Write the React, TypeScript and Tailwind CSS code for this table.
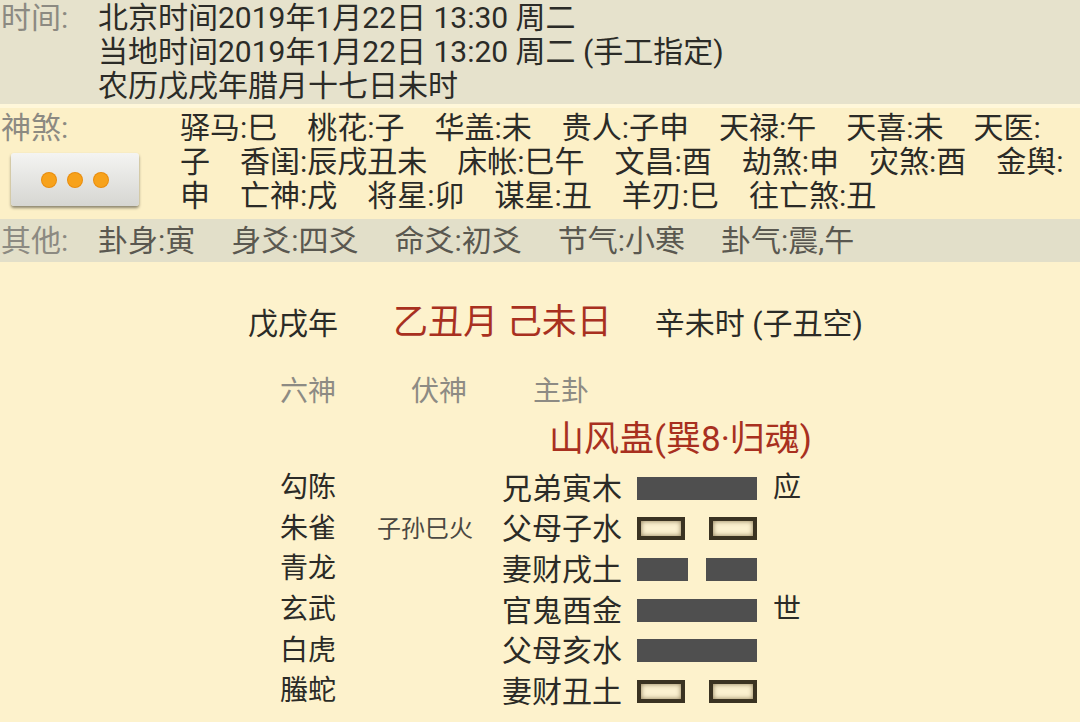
import React from "react";

const font = { fontFamily: '"Roboto", "Noto Sans CJK SC", sans-serif' };

const shensha = [
  ["驿马:巳", "桃花:子", "华盖:未", "贵人:子申", "天禄:午", "天喜:未", "天医:"],
  ["子", "香闺:辰戌丑未", "床帐:巳午", "文昌:酉", "劫煞:申", "灾煞:酉", "金舆:"],
  ["申", "亡神:戌", "将星:卯", "谋星:丑", "羊刃:巳", "往亡煞:丑"],
];

const others = ["卦身:寅", "身爻:四爻", "命爻:初爻", "节气:小寒", "卦气:震,午"];

type Yao = { god: string; fu?: string; main: string; kind: "yang" | "yin" | "hollow"; mark?: string };

const rows: Yao[] = [
  { god: "勾陈", main: "兄弟寅木", kind: "yang", mark: "应" },
  { god: "朱雀", fu: "子孙巳火", main: "父母子水", kind: "hollow" },
  { god: "青龙", main: "妻财戌土", kind: "yin" },
  { god: "玄武", main: "官鬼酉金", kind: "yang", mark: "世" },
  { god: "白虎", main: "父母亥水", kind: "yang" },
  { god: "螣蛇", main: "妻财丑土", kind: "hollow" },
];

const Line = ({ kind }: { kind: Yao["kind"] }) => {
  if (kind === "yang") return <div className="w-[120px] h-[23px] bg-[#4f4f4f]" />;
  if (kind === "yin")
    return (
      <div className="w-[120px] h-[23px] flex justify-between">
        <div className="w-[51px] h-full bg-[#4f4f4f]" />
        <div className="w-[51px] h-full bg-[#4f4f4f]" />
      </div>
    );
  return (
    <div className="w-[120px] h-[23px] flex justify-between">
      <div className="w-[48px] h-full border-[4px] border-[#3a3322] bg-[#fbf1d0] shadow-[inset_0_0_5px_rgba(90,70,30,0.7)]" />
      <div className="w-[48px] h-full border-[4px] border-[#3a3322] bg-[#fbf1d0] shadow-[inset_0_0_5px_rgba(90,70,30,0.7)]" />
    </div>
  );
};

export default function App() {
  return (
    <div className="w-[1080px] h-[722px] overflow-hidden bg-[#fdf2cc] text-[#2b2b27]" style={font}>
      {/* 时间 */}
      <div className="flex h-[104px] bg-[#e6e2cc] text-[30px] leading-[34px] pt-[1px]">
        <div className="w-[98px] pl-[1px] text-[#8c8a82]">时间:</div>
        <div>
          <div>北京时间2019年1月22日 13:30 周二</div>
          <div>当地时间2019年1月22日 13:20 周二 (手工指定)</div>
          <div>农历戊戌年腊月十七日未时</div>
        </div>
      </div>
      <div className="h-[4px] bg-[#fff7da]" />

      {/* 神煞 */}
      <div className="flex h-[111px] bg-[#fcf0c7] text-[30px] leading-[34px] pt-[3px]">
        <div className="w-[180px] pl-[1px]">
          <div className="text-[#8c8a82]">神煞:</div>
          <div className="ml-[10px] mt-[8px] w-[128px] h-[53px] rounded-[3px] bg-gradient-to-b from-[#f4f4f2] to-[#d6d6d2] shadow-[0_2px_3px_rgba(0,0,0,0.45)] flex items-center justify-center gap-[12px]">
            {[0, 1, 2].map((i) => (
              <span key={i} className="w-[14px] h-[14px] rounded-full bg-[#f7a21b] shadow-[0_0_0_1px_#e98c0c]" />
            ))}
          </div>
        </div>
        <div>
          {shensha.map((line, i) => (
            <div key={i} className="flex gap-[30px] whitespace-nowrap">
              {line.map((t) => (
                <span key={t}>{t}</span>
              ))}
            </div>
          ))}
        </div>
      </div>

      {/* 其他 */}
      <div className="flex h-[43px] bg-[#e2dfc9] text-[30px] leading-[43px] text-[#5a5850] whitespace-nowrap">
        <div className="w-[98px] pl-[1px] text-[#8c8a82]">其他:</div>
        <div className="flex gap-[36px]">
          {others.map((t) => (
            <span key={t}>{t}</span>
          ))}
        </div>
      </div>

      {/* 卦 */}
      <div className="pl-[248px] pt-[39px]">
        <div className="flex items-center h-[44px] whitespace-nowrap">
          <span className="text-[30px]">戊戌年</span>
          <span className="ml-[55px] text-[35px] text-[#a8301f]">乙丑月 己未日</span>
          <span className="ml-[43px] text-[30px]">辛未时 (子丑空)</span>
        </div>
        <div className="flex items-center h-[44px] mt-[25px] text-[28px] text-[#8d8b84]">
          <span className="ml-[32px]">六神</span>
          <span className="ml-[75px]">伏神</span>
          <span className="ml-[66px]">主卦</span>
        </div>
        <div className="h-[48px] mt-[2px] flex items-center pl-[301px] text-[35px] text-[#a8301f] whitespace-nowrap">
          山风蛊(巽8·归魂)
        </div>
        <div className="pl-[32px] pt-[4px]">
          {rows.map((r) => (
            <div key={r.main} className="flex items-center h-[40.6px] text-[28px] whitespace-nowrap">
              <span className="w-[97px]">{r.god}</span>
              <span className="w-[125px] text-[24px] text-[#4a4842]">{r.fu ?? ""}</span>
              <span className="w-[135px] text-[30px]">{r.main}</span>
              <Line kind={r.kind} />
              <span className="ml-[16px]">{r.mark ?? ""}</span>
            </div>
          ))}
        </div>
      </div>
    </div>
  );
}
